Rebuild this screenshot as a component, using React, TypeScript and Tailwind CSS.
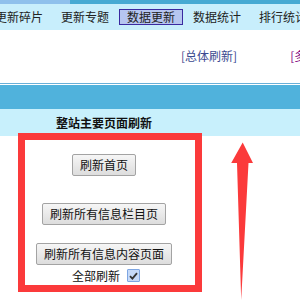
import React from "react";

const navItems = ["更新碎片", "更新专题", "数据更新", "数据统计", "排行统计"];

function Btn({ children, w }: { children: React.ReactNode; w: string }) {
  return (
    <div
      className={
        w +
        " h-[22px] flex items-center justify-center border border-[#a3a3a3] rounded-[2px] bg-gradient-to-b from-[#f6f6f6] to-[#dddddd] text-[12px] text-[#111] leading-none whitespace-nowrap"
      }
    >
      {children}
    </div>
  );
}

export default function App() {
  return (
    <div
      className="relative w-[300px] h-[301px] overflow-hidden bg-white"
      style={{ fontFamily: '"Noto Sans CJK SC", "Noto Sans", sans-serif' }}
    >
      <div className="flex h-[4px]">
        <div className="w-[70px] bg-[#8fc0ec]" />
        <div className="flex-1 bg-[#46a9d3]" />
      </div>
      <div className="h-[26px] bg-[#c8eefc] flex items-center ml-[-13px] gap-[2px]">
        {navItems.map((t, i) => (
          <div
            key={t}
            className={
              i === 2
                ? "shrink-0 w-[64px] h-[16px] flex items-center justify-center border border-[#3a2aa0] bg-[#b6c6f0] text-[12px] text-[#222] leading-none"
                : "shrink-0 w-[64px] h-[16px] flex items-center justify-center border border-transparent text-[12px] text-[#222] leading-none"
            }
          >
            {t}
          </div>
        ))}
      </div>
      <div className="h-[53px] flex items-start pt-[20px] pl-[181px] gap-[53px] text-[12px] leading-none whitespace-nowrap">
        <span className="text-[#3b4a90]">[总体刷新]</span>
        <span className="text-[#800080]">[多</span>
      </div>
      <div className="h-[1px] bg-[#6ab0d8]" />
      <div className="h-[1px] bg-white" />
      <div className="h-[24px] bg-[#50b2dc]" />
      <div className="h-[27px] bg-[#c8f0fc] flex">
        <div className="w-[208px] flex items-center justify-center text-[12px] font-bold text-[#111] leading-none">
          整站主要页面刷新
        </div>
      </div>
      <div className="w-[208px] flex flex-col items-center pt-[18px]">
        <Btn w="w-[64px]">刷新首页</Btn>
        <div className="h-[27px]" />
        <Btn w="w-[124px]">刷新所有信息栏目页</Btn>
        <div className="h-[18px]" />
        <Btn w="w-[136px]">刷新所有信息内容页面</Btn>
        <div className="flex items-center gap-[7px] mt-[4px] pl-[4px]">
          <span className="text-[12px] text-[#111] leading-none">全部刷新</span>
          <span className="w-[13px] h-[13px] border border-[#7ea6e2] bg-[#c6daf8] flex items-center justify-center rounded-[1px]">
            <svg width="9" height="8" viewBox="0 0 9 8">
              <path d="M1 4.2 L3.4 6.6 L8 1.2" fill="none" stroke="#333" strokeWidth="1.8" />
            </svg>
          </span>
        </div>
      </div>
      <div className="absolute left-[18px] top-[133px] w-[184px] h-[159px] border-[7px] border-[#fb3a3b]" />
      <svg className="absolute left-[228px] top-[140px]" width="30" height="161" viewBox="0 0 30 161">
        <path d="M14.7 2.5 L25 23 L20.5 23 L13.2 160 L9 23 L3.2 23 Z" fill="#fb3a3b" />
      </svg>
    </div>
  );
}
